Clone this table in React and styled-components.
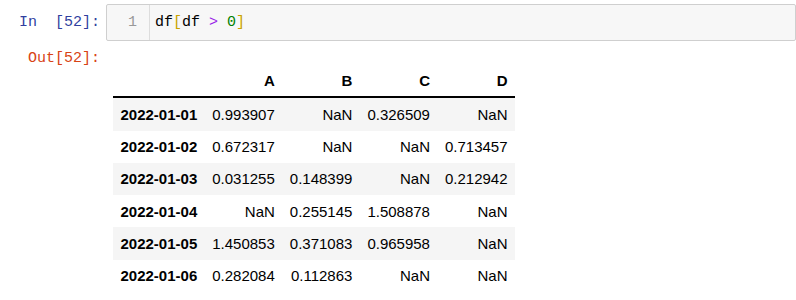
import React from "react";
import styled, { createGlobalStyle } from "styled-components";

const GlobalStyle = createGlobalStyle`
body {
  margin:0;
  background:#ffffff;
  overflow:hidden;
}
`
const Notebook = styled.div`
width:100%;
padding-top:4px;
display:flex;
flex-direction:column;
`
const CellRow = styled.div`
display:flex;
align-items:${(p) => (p.$top ? "flex-start" : "center")};
margin-top:${(p) => p.$gap || 0}px;
`
const Prompt = styled.div`
flex:0 0 100px;
text-align:right;
white-space:pre;
font-family:"Liberation Mono", monospace;
font-size:15px;
line-height:17px;
color:${(p) => (p.$out ? "#d84315" : "#303f9f")};
`
const InputBox = styled.div`
margin-left:6px;
width:720px;
height:35px;
display:flex;
align-items:center;
background:#f7f7f7;
border:1px solid #cfcfcf;
border-radius:2px;
`
const Gutter = styled.div`
width:30px;
height:100%;
padding-right:12px;
display:flex;
align-items:center;
justify-content:flex-end;
border-right:1px solid #dddddd;
font-family:"Liberation Mono", monospace;
font-size:15px;
color:#999999;
`
const Code = styled.pre`
margin:0 0 0 5px;
font-family:"Liberation Mono", monospace;
font-size:15px;
color:#000000;
`
const Tok = styled.span`
color:${(p) => p.$c};
`
const OutputArea = styled.div`
margin-left:13px;
padding-top:14px;
`
const Frame = styled.table`
border-collapse:collapse;
border-spacing:0;
font-family:"Liberation Sans", Arial, sans-serif;
font-size:15px;
color:#000000;
`
const HeadRow = styled.tr`
border-bottom:2px solid #000000;
`
const BodyRow = styled.tr`
background:${(p) => (p.$odd ? "#f5f5f5" : "#ffffff")};
`
const HeadCell = styled.th`
padding:7.5px;
text-align:right;
font-weight:bold;
line-height:17.25px;
`
const IndexCell = styled.th`
padding:7.5px;
text-align:left;
font-weight:bold;
line-height:17.25px;
`
const DataCell = styled.td`
padding:7.5px;
text-align:right;
line-height:17.25px;
`

const cols = ["A", "B", "C", "D"]
const rows = [
  ["2022-01-01", "0.993907", "NaN", "0.326509", "NaN"],
  ["2022-01-02", "0.672317", "NaN", "NaN", "0.713457"],
  ["2022-01-03", "0.031255", "0.148399", "NaN", "0.212942"],
  ["2022-01-04", "NaN", "0.255145", "1.508878", "NaN"],
  ["2022-01-05", "1.450853", "0.371083", "0.965958", "NaN"],
  ["2022-01-06", "0.282084", "0.112863", "NaN", "NaN"],
]

function App() {
  return (
    <Notebook>
      <GlobalStyle />
      <CellRow>
        <Prompt>{"In  [52]:"}</Prompt>
        <InputBox>
          <Gutter>1</Gutter>
          <Code>
            df<Tok $c="#c9a400">[</Tok>df <Tok $c="#9a1fe8">&gt;</Tok> <Tok $c="#008000">0</Tok><Tok $c="#c9a400">]</Tok>
          </Code>
        </InputBox>
      </CellRow>
      <CellRow $top $gap={9}>
        <Prompt $out>Out[52]:</Prompt>
        <OutputArea>
          <Frame>
            <thead>
              <HeadRow>
                <HeadCell></HeadCell>
                {cols.map((c) => <HeadCell key={c}>{c}</HeadCell>)}
              </HeadRow>
            </thead>
            <tbody>
              {rows.map((r, i) => (
                <BodyRow key={r[0]} $odd={i % 2 === 0}>
                  <IndexCell>{r[0]}</IndexCell>
                  {r.slice(1).map((v, j) => <DataCell key={j}>{v}</DataCell>)}
                </BodyRow>
              ))}
            </tbody>
          </Frame>
        </OutputArea>
      </CellRow>
    </Notebook>
  );
}

export default App;
